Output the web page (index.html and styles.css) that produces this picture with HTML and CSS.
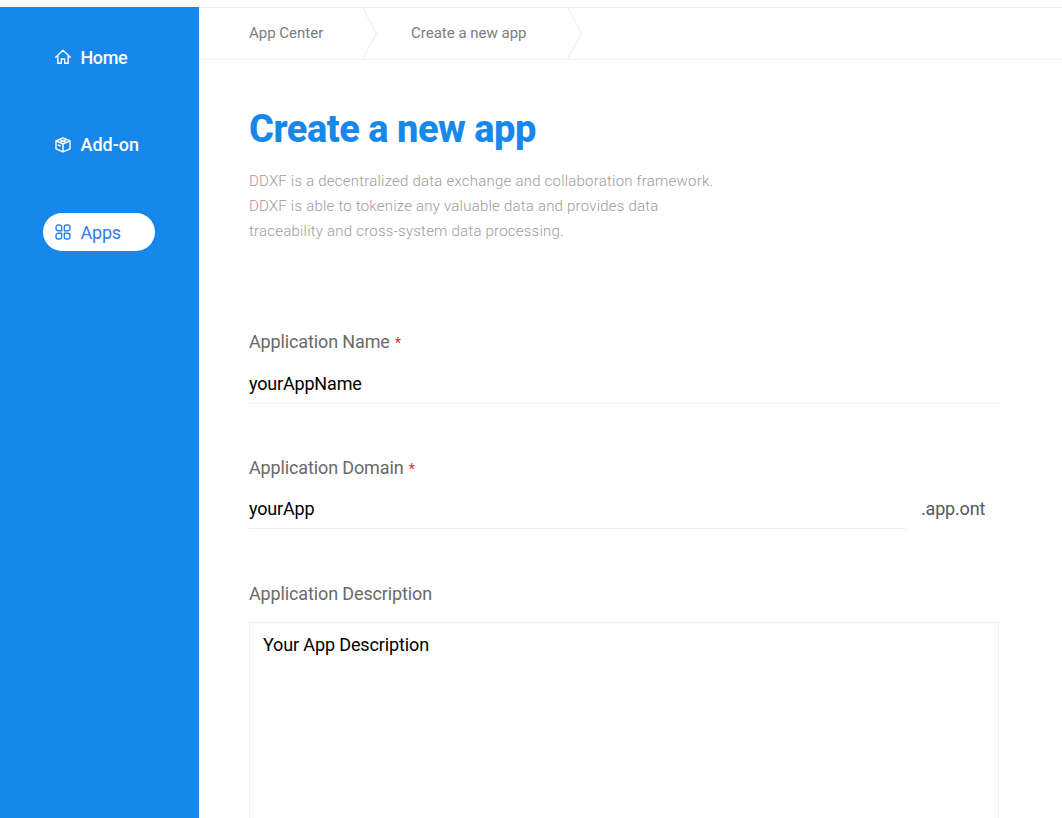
FILE: index.html
```html
<!DOCTYPE html>
<html lang="en">
<head>
<meta charset="utf-8">
<title>Create a new app</title>
<link rel="stylesheet" href="styles.css">
</head>
<body>
<div class="layout">
  <nav class="sidebar">
    <a class="nav-item"><svg class="nav-icon" viewBox="0 0 16 16"><path d="M.7 8.2 8 1.3l7.3 6.9M2.8 7v7.3h3.5V10h3.4v4.3h3.5V7"/></svg><span class="nav-home">Home</span></a>
    <a class="nav-item"><svg class="nav-icon" viewBox="0 0 16 16"><path d="M8 .8 15 3.800v8l-7 3-7-3V3.800zM1 3.800l7 3.200 7-3.200M8 7v7.800M4.500 2.300l7 3.200M11.500 2.300l-7 3.200M3.200 8.100l2 .9"/></svg><span>Add-on</span></a>
    <a class="nav-item nav-active"><svg class="nav-icon" viewBox="0 0 16 16"><path d="M6.700 6.700H3.200A2.200 2.200 0 0 1 1 4.500V3.200A2.200 2.200 0 0 1 3.200 1H4.500A2.200 2.200 0 0 1 6.700 3.200zM9.300 6.700V3.200A2.200 2.200 0 0 1 11.500 1h1.300A2.200 2.200 0 0 1 15 3.200v1.300a2.200 2.200 0 0 1-2.200 2.200zM6.700 9.300v3.500A2.200 2.200 0 0 1 4.500 15H3.200A2.200 2.200 0 0 1 1 12.800v-1.300a2.200 2.200 0 0 1 2.200-2.200zM9.300 9.300h3.500a2.200 2.200 0 0 1 2.200 2.200v1.300a2.200 2.200 0 0 1-2.200 2.200h-1.300a2.200 2.200 0 0 1-2.200-2.200z"/></svg><span>Apps</span></a>
  </nav>
  <main class="main">
    <div class="breadcrumb">
      <span class="crumb crumb-first">App Center</span>
      <svg class="chevron" viewBox="0 0 16 51"><path d="M1 0 14.500 25.500 1 50"/></svg>
      <span class="crumb crumb-second">Create a new app</span>
      <svg class="chevron" viewBox="0 0 16 51"><path d="M1 0 14.500 25.500 1 50"/></svg>
    </div>
    <div class="content">
      <h1 class="title">Create a new app</h1>
      <p class="intro">DDXF is a decentralized data exchange and collaboration framework.<br>DDXF is able to tokenize any valuable data and provides data<br>traceability and cross-system data processing.</p>
      <form class="form">
        <div class="field">
          <label class="label" for="name">Application Name <span class="required">*</span></label>
          <input class="input" id="name" value="yourAppName">
        </div>
        <div class="field">
          <label class="label" for="domain">Application Domain <span class="required">*</span></label>
          <div class="domain-row"><input class="input" id="domain" value="yourApp"><span class="suffix">.app.ont</span></div>
        </div>
        <div class="field">
          <label class="label" for="description">Application Description</label>
          <textarea class="textarea" id="description">Your App Description</textarea>
        </div>
      </form>
    </div>
  </main>
</div>
</body>
</html>
```
FILE: styles.css
```css
* { box-sizing: border-box; }
body {
  margin: 0;
  height: 818px;
  overflow: hidden;
  background: #fff;
  font-family: Roboto, "Liberation Sans", sans-serif;
}
.layout { display: flex; height: 818px; padding-top: 7px; background: linear-gradient(90deg, #fafafa 199px, #fff 199px); }
.sidebar {
  display: flex;
  flex-direction: column;
  gap: 49.500px;
  width: 199px;
  padding: 31px 0 0 43px;
  background: #1887ec;
}
.nav-item {
  display: flex;
  align-items: center;
  gap: 9.500px;
  width: 112px;
  height: 38px;
  padding-left: 12px;
  border-radius: 19px;
  color: #fff;
  font-size: 18px;
  font-weight: 500;
}
.nav-home { letter-spacing: -.4px; }
.nav-active { background: #fff; color: #2c7fe0; font-weight: 400; letter-spacing: -.2px; }
.nav-icon { width: 16px; height: 16px; fill: none; stroke: currentColor; stroke-width: 1.4; stroke-linejoin: round; stroke-linecap: round; }
.main { flex: 1; background: #fff; }
.breadcrumb {
  display: flex;
  align-items: center;
  height: 53px;
  padding-left: 50px;
  border: solid #f0f0f0;
  border-width: 1px 0;
}
.crumb { padding-bottom: 2px; color: #7c7c7c; font-size: 15px; white-space: nowrap; }
.crumb-first { width: 113px; }
.crumb-second { width: 155.500px; }
.chevron { width: 16px; height: 51px; fill: none; stroke: #f0f0f0; stroke-width: 1.3; }
.chevron + .crumb { margin-left: 33px; }
.content { width: 800px; padding: 46px 0 0 50px; }
.title { margin: 0; color: #1887ec; font-size: 38px; line-height: 46px; font-weight: 800; letter-spacing: -.48px; }
.intro { margin: 17px 0 0; color: #9c9c9c; font-size: 15px; font-weight: 300; line-height: 25px; letter-spacing: .22px; white-space: nowrap; }
.form { margin-top: 84px; }
.field { height: 126px; }
.label { display: block; height: 28px; color: #6a6a6a; font-size: 18px; line-height: 28px; letter-spacing: -.13px; }
.required { margin-left: 1px; color: #f5222d; font-size: 14px; }
.input {
  display: block;
  width: 100%;
  height: 40px;
  margin-top: 8px;
  padding: 0;
  border: 0;
  border-bottom: 1px solid #f0f0f0;
  background: none;
  color: #000;
  font: 18px Roboto, sans-serif;
  letter-spacing: -.18px;
}
.domain-row { display: flex; align-items: center; }
.domain-row .input { width: 657px; margin-top: 7px; }
.suffix { margin: 6px 0 0 15px; color: #5a5a5a; font-size: 18px; letter-spacing: -.18px; }
.textarea {
  display: block;
  width: 100%;
  height: 230px;
  margin-top: 14px;
  padding: 11px 13px;
  border: 1px solid #f0f0f0;
  resize: none;
  color: #000;
  font: 18px Roboto, sans-serif;
  letter-spacing: -.13px;
}
```
